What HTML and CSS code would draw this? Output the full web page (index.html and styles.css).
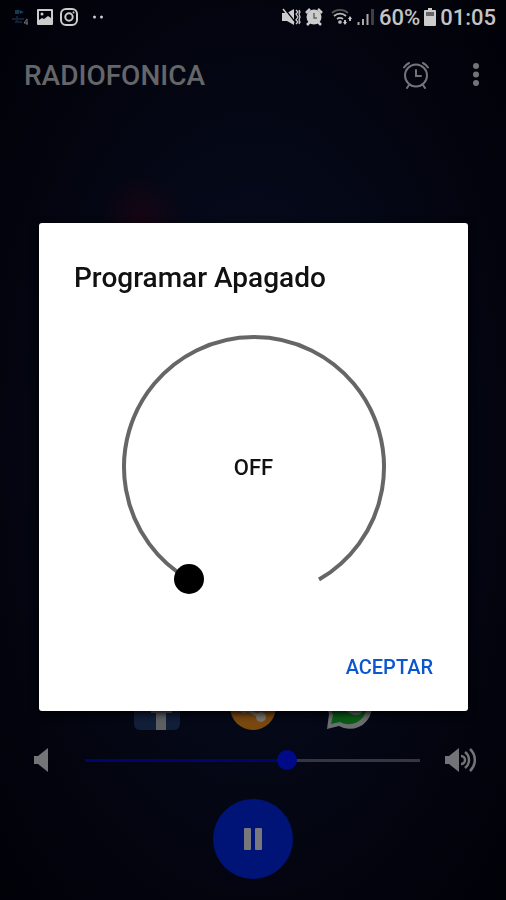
FILE: index.html
```
<!DOCTYPE html>
<html lang="es">
<head>
  <meta charset="UTF-8" />
  <meta name="viewport" content="width=device-width, initial-scale=1.0"/>
  <title>Radiofonica</title>
  <link rel="stylesheet" href="styles.css">
</head>
<body>
  <div class="status-bar">
    <div class="status-group">
      <svg class="app-badge" width="20" height="20" viewBox="0 0 20 20">
        <path d="M5 3h4v4H5z" fill="#163a55"/>
        <path d="M9 3l5 2-4 2z" fill="#1b3f5c"/>
        <path d="M2 12h12M5 15h7M7 9v6" stroke="#0f2033" stroke-width="2" fill="none"/>
        <path d="M17 12v6M14 16h4M17 12l-3 4" stroke="#777" stroke-width="1"/>
      </svg>
      <svg width="18" height="18" viewBox="0 0 18 18">
        <path fill="#ccc" fill-rule="evenodd" d="M2 1h14a1 1 0 0 1 1 1v14a1 1 0 0 1-1 1H2a1 1 0 0 1-1-1V2a1 1 0 0 1 1-1zM3 3v9l3-2 2 1 4-3 3 2V3z"/>
        <circle cx="6" cy="6" r="1.500" fill="#ccc"/>
      </svg>
      <svg width="18" height="18" viewBox="0 0 18 18" fill="none" stroke="#ccc" stroke-width="2">
        <rect x="1" y="1" width="16" height="16" rx="5"/>
        <circle cx="9" cy="9" r="3.700"/>
        <circle cx="13.500" cy="4.500" r="1" fill="#ccc" stroke="none"/>
      </svg>
      <svg class="more-dots" width="12" height="18" viewBox="0 0 12 18" fill="#ccc">
        <circle cx="2.500" cy="9" r="1.500"/>
        <circle cx="9.500" cy="9" r="1.500"/>
      </svg>
    </div>
    <div class="status-group status-right">
      <svg width="20" height="18" viewBox="0 0 20 18">
        <path fill="#ccc" d="M1 5h5l7-4v16l-7-4H1z"/>
        <path d="M3 0l11 14" stroke="#05060f" stroke-width="1.500"/>
        <path d="M2 1l11 14" stroke="#ccc" stroke-width="1.500"/>
        <path d="M15 2l2 2-2 2 2 3-2 3 2 2-2 2M18 2l1 2-1 2 1 3-1 3 1 2-1 2" stroke="#ccc" stroke-width="1.300" fill="none"/>
      </svg>
      <svg width="18" height="18" viewBox="0 0 18 18">
        <path d="M1 5l4-4M17 5l-4-4M2 17l4-4M16 17l-4-4" stroke="#ccc" stroke-width="2.500"/>
        <circle cx="9" cy="9" r="7.500" fill="#ccc"/>
        <path d="M9 5v5h3" stroke="#666" stroke-width="1.500" fill="none"/>
      </svg>
      <svg class="wifi" width="22" height="18" viewBox="0 0 22 18" fill="none" stroke="#bbb" stroke-width="1.700">
        <path d="M1 5a12 12 0 0 1 16 0" stroke="#555"/>
        <path d="M3 8a9 9 0 0 1 12 0M6 11a5 5 0 0 1 6 0"/>
        <circle cx="9" cy="14" r="1" fill="#ccc"/>
        <path d="M14 12v3M19 10v3" stroke-width="2"/>
        <path d="M12 14l2 3 2-3zM17 11l2-3 2 3z" fill="#ccc" stroke="none"/>
      </svg>
      <svg width="18" height="18" viewBox="0 0 18 18">
        <path d="M1.500 14v3M6 11v6M10.500 6v11" stroke="#aaa" stroke-width="2"/>
        <path d="M15.500 1v16" stroke="#3d3d42" stroke-width="3"/>
      </svg>
      <span>60%</span>
      <svg width="12" height="18" viewBox="0 0 12 18">
        <path fill="#ccc" d="M4 0h4v2h3a1 1 0 0 1 1 1v14a1 1 0 0 1-1 1H1a1 1 0 0 1-1-1V3a1 1 0 0 1 1-1h3z"/>
        <path d="M2 4h8v4H2z" fill="#666"/>
      </svg>
      <span>01:05</span>
    </div>
  </div>

  <header class="app-bar">
    <h1>RADIOFONICA</h1>
    <button class="icon-btn" aria-label="Programar apagado">
      <svg width="28" height="28" viewBox="0 0 28 28" fill="none" stroke="#737477" stroke-width="2" stroke-linecap="round">
        <circle cx="14" cy="14.500" r="11"/>
        <path d="M14 9v6h5"/>
        <path d="M2 6.500q2-3 5-4.500M26 6.500q-2-3-5-4.500M7 24l-2 3M21 24l2 3"/>
      </svg>
    </button>
    <button class="icon-btn" aria-label="Más opciones">
      <svg width="8" height="26" viewBox="0 0 8 26" fill="#737477">
        <circle cx="4" cy="4" r="3"/>
        <circle cx="4" cy="12.500" r="3"/>
        <circle cx="4" cy="21" r="3"/>
      </svg>
    </button>
  </header>

  <main class="player">
    <div class="social">
      <a href="#facebook" aria-label="Facebook">
        <svg width="46" height="46" viewBox="0 0 46 46">
          <rect width="46" height="46" rx="6" fill="#111e38"/>
          <path d="M22 46V29h-5v-8h5v-5q0-9 9-9h6v8h-4q-2 0-2 2v4h8l-1 8h-6v17z" fill="#5e5f63"/>
        </svg>
      </a>
      <a href="#compartir" aria-label="Compartir">
        <svg width="46" height="46" viewBox="0 0 46 46">
          <circle cx="23" cy="23" r="23" fill="#79480f"/>
          <path d="M31 12L14 24l17 9" stroke="#77736e" stroke-width="3" fill="none"/>
          <g fill="#77736e">
            <circle cx="31" cy="12" r="5"/>
            <circle cx="14" cy="24" r="5"/>
            <circle cx="31" cy="33" r="5"/>
          </g>
        </svg>
      </a>
      <a href="#whatsapp" aria-label="WhatsApp">
        <svg width="46" height="46" viewBox="0 0 46 46">
          <path d="M1 45l2-15a22 22 0 1 1 10 12z" fill="#6b6e6e"/>
          <path d="M5 40l2-9a18 18 0 1 1 7 7z" fill="#0a5b17"/>
          <path d="M16 11q3-3 5 1l1 3-2 3q3 5 8 7l3-3 5 3q1 6-6 6-7 0-13-8-6-9-1-12z" fill="#6b6e6e"/>
        </svg>
      </a>
    </div>

    <div class="volume">
      <svg width="16" height="26" viewBox="0 0 16 26">
        <path d="M1 9h4l10-8v24L5 17H1z" fill="#737477"/>
      </svg>
      <input type="range" min="0" max="100" value="61" aria-label="Volumen">
      <svg width="32" height="26" viewBox="0 0 32 26">
        <path d="M1 9h4l10-8v24L5 17H1z" fill="#737477"/>
        <path d="M17 9a4 4 0 0 1 0 8M21 5a10 10 0 0 1 0 16M26 2a15 15 0 0 1 0 22" stroke="#737477" stroke-width="2.500" fill="none"/>
      </svg>
    </div>

    <button class="pause-btn" aria-label="Pausar">
      <svg width="18" height="22" viewBox="0 0 18 22" fill="#77777c">
        <rect x="0" y="0" width="7" height="22" rx="1"/>
        <rect x="11" y="0" width="7" height="22" rx="1"/>
      </svg>
    </button>
  </main>

  <div class="overlay">
    <div class="dialog" role="dialog" aria-labelledby="dialog-title">
      <h2 id="dialog-title">Programar Apagado</h2>
      <div class="dial">
        <svg viewBox="0 0 270 270">
          <path d="M70 247.600A130 130 0 1 1 200 247.600" fill="none" stroke="#666" stroke-width="4"/>
          <circle cx="70" cy="247" r="15" fill="#000"/>
        </svg>
        <span>OFF</span>
      </div>
      <button class="accept-btn">ACEPTAR</button>
    </div>
  </div>
</body>
</html>
```

FILE: styles.css
```
* {
  box-sizing: border-box;
}

body {
  margin: 0;
  min-height: 100vh;
  display: flex;
  flex-direction: column;
  font-family: Roboto, "Liberation Sans", sans-serif;
  background:
    radial-gradient(circle at 28% 24%, rgba(50, 0, 15, 0.4), transparent 42px),
    radial-gradient(ellipse at 50% 50%, #060a1c 30%, #04061280 75%, transparent),
    #010108;
}

h1,
h2 {
  margin: 0;
  font-weight: 500;
}

svg {
  display: block;
}

button {
  background: none;
  border: none;
  padding: 0;
  font-family: inherit;
  cursor: pointer;
}

.status-bar {
  height: 34px;
  padding: 0 10px;
  display: flex;
  justify-content: space-between;
  align-items: center;
  color: #c4c4c6;
  font-size: 22px;
  font-weight: 500;
}

.status-group {
  display: flex;
  align-items: center;
  gap: 6px;
}

.more-dots {
  margin-left: 8px;
}

.status-right {
  gap: 4px;
}

.wifi {
  margin-left: 4px;
}

.app-bar {
  height: 82px;
  padding: 0 26px 0 24px;
  display: flex;
  align-items: center;
  gap: 42px;
}

.app-bar h1 {
  flex: 1;
  font-size: 28px;
  color: #656669;
}

.player {
  flex: 1;
  display: flex;
  flex-direction: column;
  justify-content: flex-end;
  align-items: center;
  padding-bottom: 21px;
}

.social {
  display: flex;
  gap: 50px;
}

.volume {
  width: 100%;
  height: 30px;
  margin: 15px 0 24px;
  padding: 0 30px 0 33px;
  display: flex;
  align-items: center;
}

.volume input {
  flex: 1;
  min-width: 0;
  height: 20px;
  margin: 0 24px 0 36px;
  appearance: none;
  background: linear-gradient(to right, #00056e 60%, #35363f 60%) center / 100% 3px no-repeat;
}

.volume input::-webkit-slider-thumb {
  appearance: none;
  width: 20px;
  height: 20px;
  border-radius: 50%;
  background: #000a86;
}

.pause-btn {
  width: 80px;
  height: 80px;
  border-radius: 50%;
  background: #001478;
  display: flex;
  align-items: center;
  justify-content: center;
}

.overlay {
  position: fixed;
  inset: 34px 0 0;
  padding: 0 38px 0 39px;
  display: flex;
  align-items: center;
}

.dialog {
  flex: 1;
  padding: 37px 35px 24px;
  display: flex;
  flex-direction: column;
  background: #fff;
  border-radius: 3px;
  box-shadow: 0 2px 8px #000;
}

.dialog h2 {
  font-size: 28px;
  line-height: 36px;
  color: #111;
}

.dial {
  width: 270px;
  height: 270px;
  margin: 36px 0 45px;
  align-self: center;
  display: grid;
  place-items: center;
}

.dial svg,
.dial span {
  grid-area: 1 / 1;
}

.dial span {
  font-size: 22px;
  font-weight: 500;
  color: #111;
}

.accept-btn {
  align-self: flex-end;
  height: 40px;
  font-size: 20px;
  font-weight: 500;
  color: #0b57d0;
}
```
